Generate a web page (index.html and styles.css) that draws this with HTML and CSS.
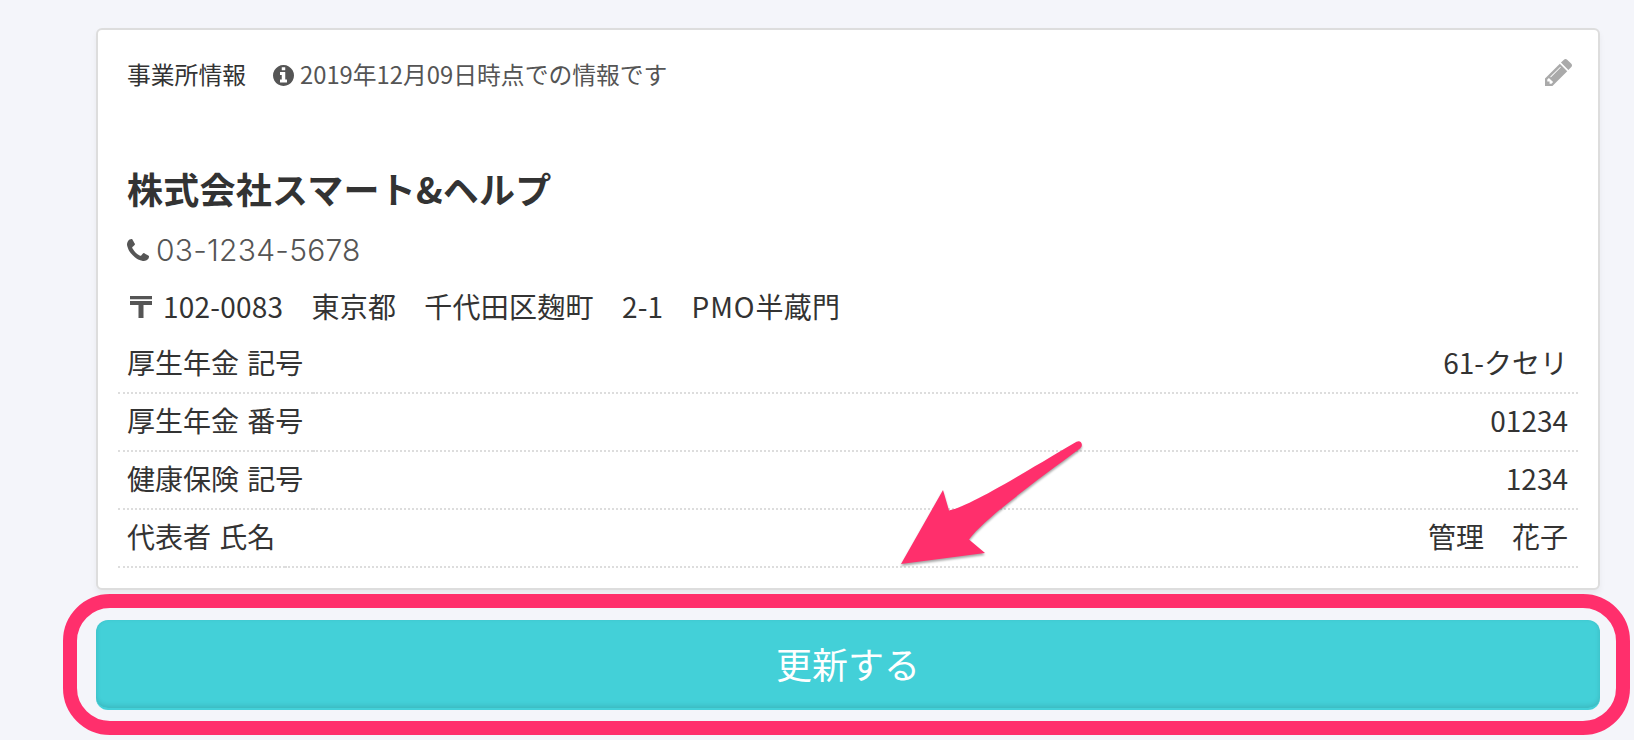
FILE: index.html
```html
<!DOCTYPE html>
<html lang="ja">
<head>
<meta charset="utf-8">
<title>事業所情報</title>
<link rel="stylesheet" href="styles.css">
</head>
<body>
<main class="page">
  <section class="card">
    <header class="card-head">
      <span class="card-title">事業所情報</span>
      <svg class="icon-info" viewBox="128 128 1536 1536"><path d="M1152 1376v-160q0-14-9-23t-23-9h-96v-512q0-14-9-23t-23-9h-320q-14 0-23 9t-9 23v160q0 14 9 23t23 9h96v320h-96q-14 0-23 9t-9 23v160q0 14 9 23t23 9h448q14 0 23-9t9-23zm-128-896v-160q0-14-9-23t-23-9h-192q-14 0-23 9t-9 23v160q0 14 9 23t23 9h192q14 0 23-9t9-23zm640 416q0 209-103 385.5t-279.5 279.5-385.5 103-385.5-103-279.5-279.5-103-385.5 103-385.5 279.5-279.5 385.5-103 385.5 103 279.5 279.5 103 385.5z"/></svg>
      <span class="as-of">2019年12月09日時点での情報です</span>
      <svg class="icon-edit" viewBox="128 149 1515 1515"><path d="M491 1536l91-91-235-235-91 91v107h128v128h107zm523-928q0-22-22-22-10 0-17 7l-542 542q-7 7-7 17 0 22 22 22 10 0 17-7l542-542q7-7 7-17zm-54-192l416 416-832 832h-416v-416zm683 96q0 53-37 90l-166 166-416-416 166-165q36-38 90-38 53 0 91 38l235 234q37 39 37 91z"/></svg>
    </header>
    <h1 class="company">株式会社スマート&amp;ヘルプ</h1>
    <div class="phone">
      <svg class="icon-phone" viewBox="192 128 1408 1408"><path d="M1600 1240q0 27-10 70.5t-21 68.5q-21 50-122 106-94 51-186 51-27 0-52.5-3.5t-57.5-12.5-47.5-14.5-55.5-20.5-49-18q-98-35-175-83-128-79-264.5-215.5t-215.5-264.5q-48-77-83-175-3-9-18-49t-20.5-55.5-14.5-47.5-12.5-57.5-3.5-52.5q0-92 51-186 56-101 106-122 25-11 68.5-21t70.5-10q14 0 21 3 18 6 53 76 11 19 30 54t35 63.5 31 53.5q3 4 17.5 25t21.5 35.5 7 28.5q0 20-28.5 50t-62 55-62 53-28.5 46q0 9 5 22.5t8.5 20.5 14 24 11.5 19q76 137 174 235t235 174q2 1 19 11.5t24 14 20.5 8.5 22.5 5q18 0 46-28.5t53-62 55-62 50-28.5q14 0 28.5 7t35.5 21.5 25 17.5q25 15 53.5 31t63.5 35 54 30q70 35 76 53 3 7 3 21z"/></svg>
      <span class="phone-number">03-1234-5678</span>
    </div>
    <div class="address">
      <svg class="icon-postal" viewBox="0 0 22 22"><path d="M0 0h22v3.300H0zM0 5h22v4H13.500v13h-5V9H0z"/></svg>
      <span class="address-text">102-0083　東京都　千代田区麹町　2-1　<span class="building">PMO</span>半蔵門</span>
    </div>
    <dl class="details">
      <div class="row"><dt>厚生年金 記号</dt><dd>61-クセリ</dd></div>
      <div class="row"><dt>厚生年金 番号</dt><dd>01234</dd></div>
      <div class="row"><dt>健康保険 記号</dt><dd>1234</dd></div>
      <div class="row"><dt>代表者 氏名</dt><dd>管理　花子</dd></div>
    </dl>
  </section>
  <button class="update" type="button">更新する</button>
</main>
<div class="highlight"></div>
<svg class="arrow" viewBox="0 0 200 140"><path d="M11 134L53 60L59 80.500C80 76 130 45 186.500 11.800C191 9.500 194 15 190 18.500C150 48 95 88 79 109.500L95 123Z"/></svg>
</body>
</html>
```

FILE: styles.css
```css
* { box-sizing: border-box; }

body {
  position: relative;
  margin: 0;
  height: 740px;
  overflow: hidden;
  background: #f4f5fa;
  color: #333;
  font-family: "Noto Sans CJK JP", sans-serif;
}

svg { display: block; flex: none; }

.page {
  display: flex;
  flex-direction: column;
  gap: 30px;
  padding: 28px 34px 0 96px;
}

.card {
  height: 562px;
  padding: 25px 20px 20px;
  border: 2px solid #ddd;
  border-radius: 6px;
  background: #fff;
  box-shadow: 0 4px 6px rgba(0, 0, 0, .05);
}

.card-head {
  display: flex;
  align-items: center;
  height: 38px;
  padding: 0 6px 0 9px;
  font-size: 23.800px;
  line-height: 38px;
  white-space: nowrap;
}

.icon-info { width: 21px; height: 21px; margin: 2px 6px 0 27px; fill: #555; }
.as-of { color: #555; }
.icon-edit { width: 27px; height: 27px; margin: -3px 0 0 auto; fill: #aaa; }

.company {
  margin: 67px 0 0;
  padding-left: 9px;
  font-size: 36px;
  font-weight: 700;
  line-height: 56px;
  letter-spacing: .25px;
}

.phone {
  display: flex;
  align-items: center;
  height: 56px;
  margin-top: 6px;
  padding-left: 9px;
  color: #555;
}

.icon-phone { width: 22px; height: 22px; margin-right: 7px; fill: #555; }
.phone-number {
  font: 300 30px/56px Inter, "Noto Sans CJK JP", sans-serif;
  letter-spacing: .25px;
}

.address {
  display: flex;
  align-items: center;
  height: 58px;
  padding: 0 0 2px 12px;
  font-size: 28px;
  letter-spacing: .22px;
  white-space: nowrap;
}

.icon-postal { width: 22px; height: 22px; margin: 2px 11px 0 0; fill: #555; }
.building { letter-spacing: .9px; }

.details { margin: 0; }

.row {
  display: flex;
  height: 58px;
  font-size: 28px;
  line-height: 52px;
}

.row dt, .row dd {
  margin: 0;
  padding: 0 10px;
  border-bottom: 2px dotted #ddd;
}

.row dt { padding-left: 9px; word-spacing: 2px; }
.row dd { flex: 1; text-align: right; }

.update {
  height: 90px;
  padding: 0 0 2px;
  border: 0;
  border-bottom: 2px solid #43d0d8;
  border-radius: 12px;
  background: #43d0d8;
  box-shadow: inset 0 -2px 5px rgba(0, 0, 0, .12);
  color: #fff;
  font: 400 36px/1 "Noto Sans CJK JP", sans-serif;
}

.highlight {
  position: absolute;
  top: 593.500px;
  left: 63px;
  width: 1567px;
  height: 141px;
  border: 14px solid #ff2f6c;
  border-radius: 47px;
}

.arrow {
  position: absolute;
  top: 430px;
  left: 890px;
  width: 200px;
  height: 140px;
  fill: #ff2f6c;
  filter: drop-shadow(0 2px 1px rgba(0, 0, 0, .35));
}
```
